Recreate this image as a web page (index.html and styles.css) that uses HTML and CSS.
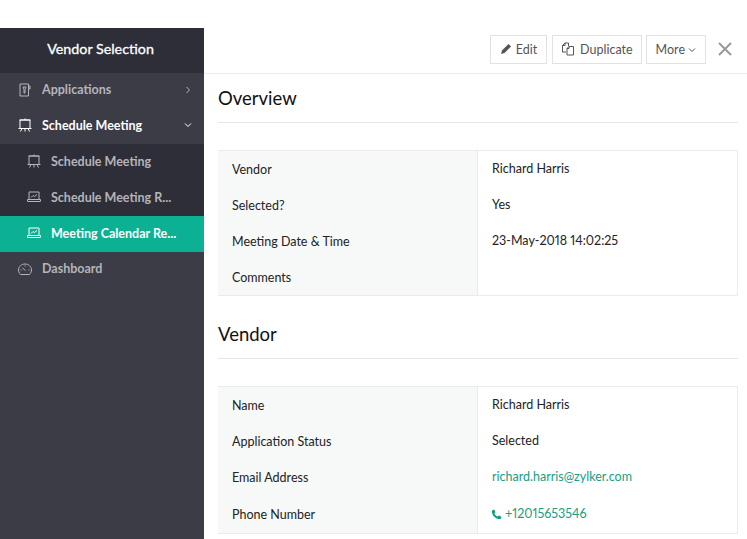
FILE: index.html
```html
<!DOCTYPE html>
<html lang="en">
<head>
  <meta charset="UTF-8">
  <title>Vendor Selection</title>
  <link rel="stylesheet" href="styles.css">
</head>
<body>
  <div class="app">
    <aside class="sidebar">
      <div class="app-title">Vendor Selection</div>
      <div class="menu-item">
        <svg class="icon" viewBox="0 0 14 14"><path d="M2 1h8.500v12H2zM10.500 3H12v3h-1.500M5 4h3L7 6.500V10H6V6.500z"/></svg>
        <span class="menu-label">Applications</span>
        <svg class="caret" viewBox="0 0 8 8"><path d="M2.500 1l3 3-3 3"/></svg>
      </div>
      <div class="menu-item active-parent">
        <svg class="icon" viewBox="0 0 14 14"><path d="M.5 10.500h13M2 10.500V2h10v8.500M1.500 2h11M7 .5V2M4 10.500L2.500 13.500M10 10.500l1.500 3M7 10.500v3"/></svg>
        <span class="menu-label">Schedule Meeting</span>
        <svg class="caret" viewBox="0 0 8 8"><path d="M1 2.500l3 3 3-3"/></svg>
      </div>
      <div class="submenu">
        <div class="sub-item">
          <svg class="icon" viewBox="0 0 14 14"><path d="M.5 10.500h13M2 10.500V2h10v8.500M1.500 2h11M7 .5V2M4 10.500L2.500 13.500M10 10.500l1.500 3M7 10.500v3"/></svg>
          <span class="menu-label">Schedule Meeting</span>
        </div>
        <div class="sub-item">
          <svg class="icon" viewBox="0 0 14 14"><path d="M2 9.500V2h10v7.500M.5 9.500h13V11a.5.5 0 0 1-.5.5H1a.5.5 0 0 1-.5-.5zM4 7.500l2-2 1.500 1L10 4.500"/></svg>
          <span class="menu-label">Schedule Meeting R...</span>
        </div>
        <div class="sub-item selected">
          <svg class="icon" viewBox="0 0 14 14"><path d="M2 9.500V2h10v7.500M.5 9.500h13V11a.5.5 0 0 1-.5.5H1a.5.5 0 0 1-.5-.5zM4 7.500l2-2 1.500 1L10 4.500"/></svg>
          <span class="menu-label">Meeting Calendar Re...</span>
        </div>
      </div>
      <div class="menu-item">
        <svg class="icon" viewBox="0 0 14 14"><path d="M2.500 12.500h9C13 11 13.500 9.500 13.500 8 13.500 4.500 10.500 2 7 2S.5 4.500.5 8c0 1.500.5 3 2 4.500zM4.500 6l3 2.500M7 8.500h.01M2.500 8h1M10.500 8h1M7 3.500v1"/></svg>
        <span class="menu-label">Dashboard</span>
      </div>
    </aside>

    <main class="content">
      <div class="toolbar">
        <button class="btn btn-edit">
          <svg class="btn-icon" viewBox="0 0 12 12"><path class="solid" d="M8.500 1l2.500 2.500-6.500 6.500L1 11l1-3.500z"/></svg>
          Edit
        </button>
        <button class="btn btn-dup">
          <svg class="btn-icon dup" viewBox="0 0 14 14"><path d="M5 10H1.500V3.500L4 1h3.500v3M4 1v2.500H1.500M6 13V6.500L8 4.500h4.500V13zM8 4.500v2H6"/></svg>
          Duplicate
        </button>
        <button class="btn btn-more">
          More
          <svg class="btn-caret" viewBox="0 0 8 8"><path d="M1 2.500l3 3 3-3"/></svg>
        </button>
        <svg class="close" viewBox="0 0 14 14"><path d="M1 1l12 12M13 1L1 13"/></svg>
      </div>

      <section class="section">
        <h2 class="section-title">Overview</h2>
        <div class="details">
          <div class="labels">
            <div class="label">Vendor</div>
            <div class="label">Selected?</div>
            <div class="label">Meeting Date &amp; Time</div>
            <div class="label">Comments</div>
          </div>
          <div class="values">
            <div class="value">Richard Harris</div>
            <div class="value">Yes</div>
            <div class="value">23-May-2018 14:02:25</div>
            <div class="value"></div>
          </div>
        </div>
      </section>

      <section class="section">
        <h2 class="section-title">Vendor</h2>
        <div class="details">
          <div class="labels">
            <div class="label">Name</div>
            <div class="label">Application Status</div>
            <div class="label">Email Address</div>
            <div class="label tall">Phone Number</div>
          </div>
          <div class="values">
            <div class="value">Richard Harris</div>
            <div class="value">Selected</div>
            <div class="value link">richard.harris@zylker.com</div>
            <div class="value link phone">
              <svg class="phone-icon" viewBox="0 0 12 12"><path d="M1 1.500L3.500.5 5 3.500 3.700 4.700c.5 1.500 1.800 2.900 3.500 3.600L8.500 7l3 1.500-1 2.500C5 11.500.5 6.500 1 1.500z"/></svg>
              +12015653546
            </div>
          </div>
        </div>
      </section>
    </main>
  </div>
</body>
</html>
```

FILE: styles.css
```css
html, body {
  margin: 0;
  height: 100%;
  overflow: hidden;
  background: #fff;
}
body {
  padding-top: 28px;
  box-sizing: border-box;
  font-family: "Lato", "Open Sans", sans-serif;
  font-size: 12.5px;
  font-variant-numeric: proportional-nums;
  color: #222;
}
.app {
  display: flex;
  height: 511px;
}

/* sidebar */
.sidebar {
  width: 204px;
  flex-shrink: 0;
  background: #3c3c47;
  color: #b4b4ba;
}
.app-title {
  height: 45px;
  padding-right: 3px;
  box-sizing: border-box;
  line-height: 42px;
  text-align: center;
  background: #2e2e38;
  color: #fff;
  font-size: 14.3px;
  -webkit-text-stroke: 0.3px #fff;
}
.menu-item, .sub-item {
  display: flex;
  align-items: center;
  box-sizing: border-box;
  height: 36px;
  padding-bottom: 2px;
  font-weight: 700;
  font-size: 12.5px;
}
.menu-item {
  padding-left: 18px;
  padding-right: 12px;
  height: 35.5px;
}
.menu-item .menu-label {
  margin-left: 10px;
  flex: 1;
}
.active-parent {
  color: #fff;
}
.submenu {
  background: #2e2e38;
}
.sub-item {
  padding-left: 27px;
}
.sub-item .menu-label {
  margin-left: 10px;
}
.selected {
  background: #0cb194;
  color: #fff;
}
.icon {
  width: 14px;
  height: 14px;
  fill: none;
  stroke: currentColor;
  stroke-width: 1;
}
.caret {
  width: 8px;
  height: 8px;
  fill: none;
  stroke: currentColor;
  stroke-width: 1;
}

/* main */
.content {
  flex: 1;
  min-width: 0;
}
.toolbar {
  display: flex;
  align-items: center;
  justify-content: flex-end;
  gap: 5px;
  box-sizing: border-box;
  height: 46px;
  padding: 0 15px 3px 0;
  border-bottom: 1px solid #ebebeb;
}
.btn {
  display: flex;
  align-items: center;
  gap: 5px;
  height: 29px;
  padding: 0 8px 0 9px;
  background: #fff;
  border: 1px solid #e2e2e2;
  font-family: inherit;
  font-size: 12.5px;
  color: #555;
}
.btn-edit {
  gap: 4px;
  padding-right: 9px;
}
.btn-dup {
  padding: 0 8px;
}
.btn-more {
  margin-left: -1px;
  padding: 1px 9px 0;
}
.btn-icon {
  width: 12px;
  height: 12px;
}
.solid {
  fill: #555;
}
.dup {
  width: 14px;
  height: 14px;
  fill: none;
  stroke: #555;
  stroke-width: 1;
}
.btn-caret {
  width: 8px;
  height: 8px;
  margin-left: -2px;
  fill: none;
  stroke: #555;
  stroke-width: 1;
}
.close {
  width: 14px;
  height: 14px;
  margin-left: 7px;
  fill: none;
  stroke: #999;
  stroke-width: 2;
}
.section {
  padding: 0 9px 0 14px;
}
.section-title {
  margin: 0 0 27px;
  height: 48px;
  line-height: 48px;
  border-bottom: 1px solid #e6e6e6;
  font-size: 18.5px;
  font-weight: 400;
  color: #111;
}
.details {
  display: flex;
  border: 1px solid #ebebeb;
  border-left: 0;
  margin-bottom: 14px;
}
.labels {
  width: 260px;
  padding-left: 14px;
  box-sizing: border-box;
  background: #f7f9f8;
  border-right: 1px solid #ebebeb;
}
.label {
  height: 36px;
  line-height: 38px;
}
.label.tall {
  height: 38px;
  line-height: 40px;
}
.values {
  flex: 1;
  padding-left: 14px;
}
.value {
  height: 36px;
  line-height: 36px;
}
.link {
  color: #1a9d83;
}
.phone {
  display: flex;
  align-items: center;
  gap: 3px;
  height: 38px;
  line-height: 38px;
}
.phone-icon {
  width: 11px;
  height: 11px;
  margin-left: -1px;
  fill: #1a9d83;
}
```
